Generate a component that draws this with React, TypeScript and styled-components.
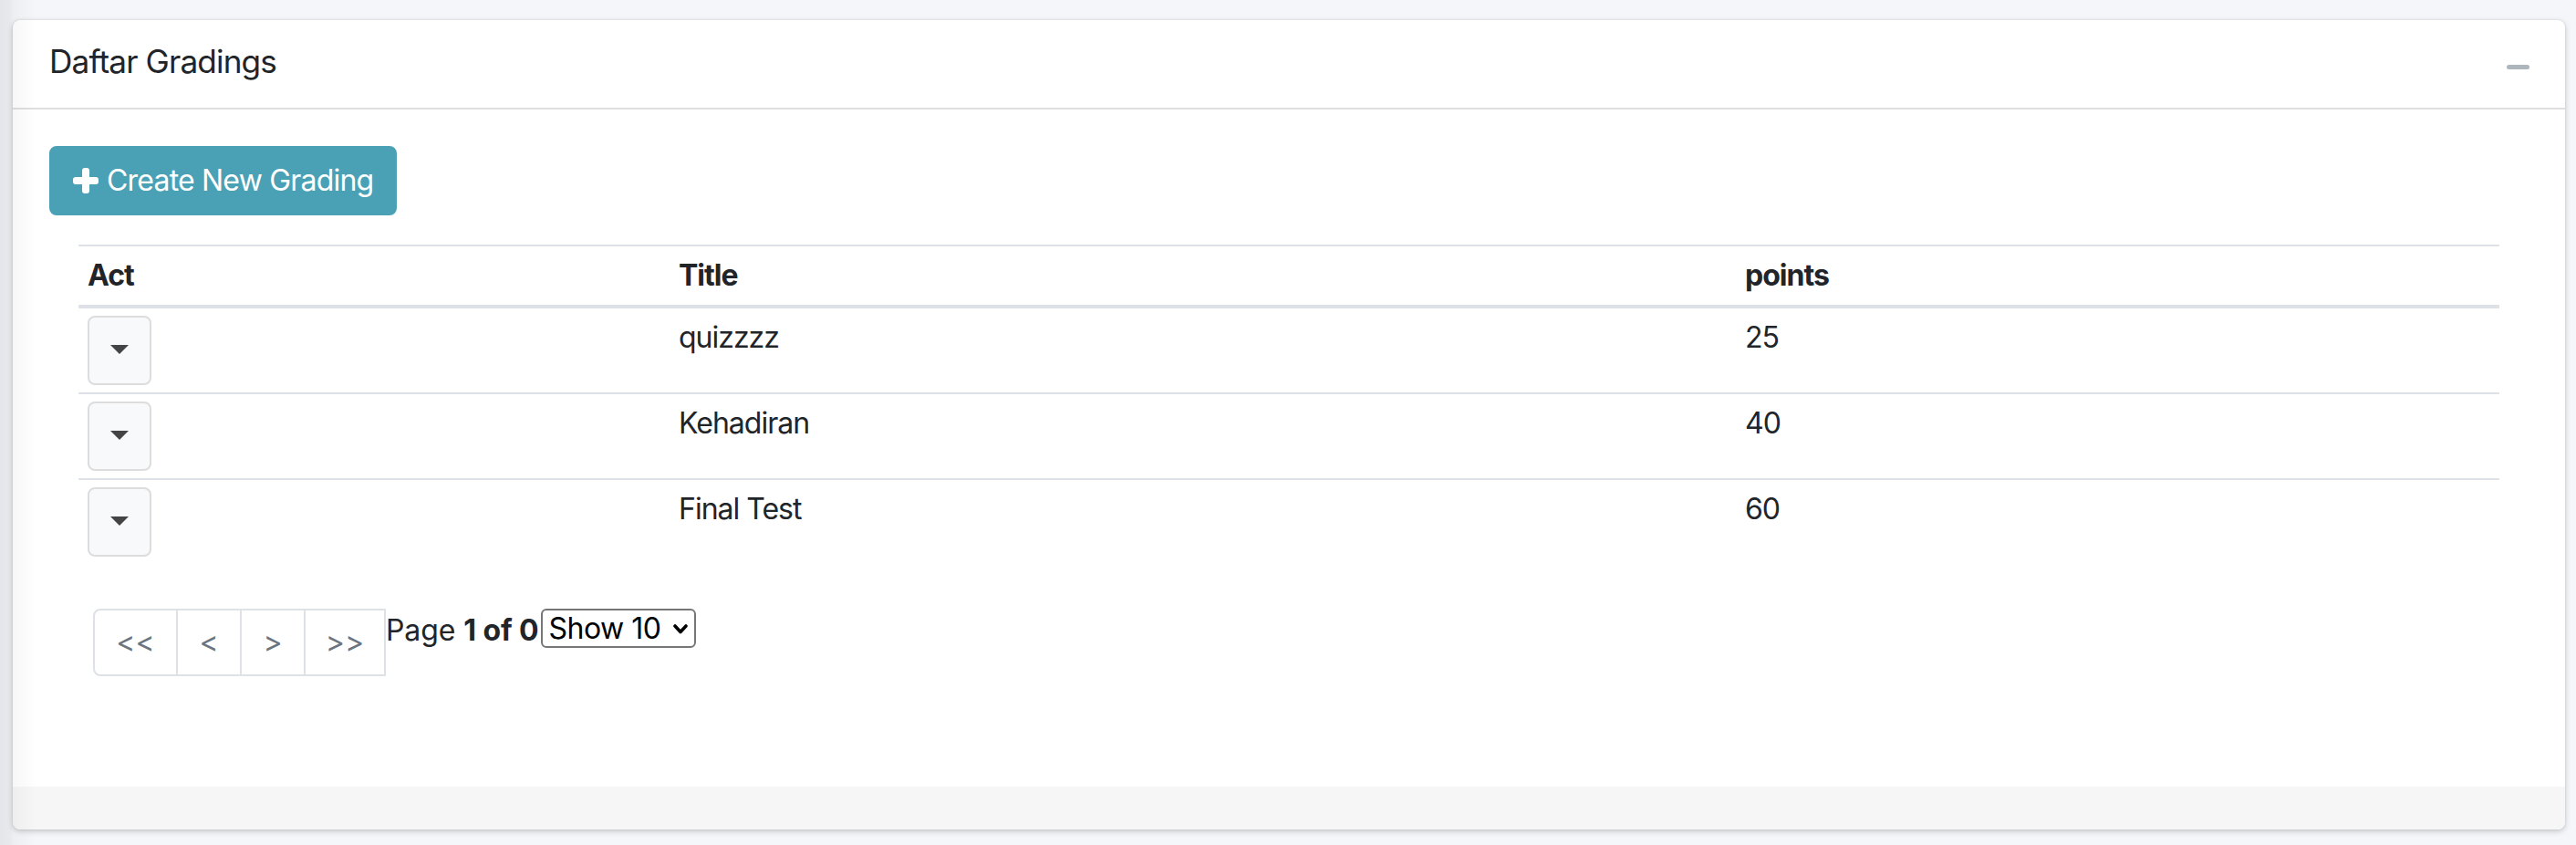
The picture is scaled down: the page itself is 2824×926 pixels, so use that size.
import React from "react";
import styled, { createGlobalStyle } from "styled-components";

const GlobalStyle = createGlobalStyle`
  html, body { margin: 0; padding: 0; background: #f4f6f9; }
  body {
    font-family: Inter, "Noto Sans", "Liberation Sans", sans-serif;
    color: #212529;
  }
  *, *::before, *::after { box-sizing: border-box; }
`;

const Page = styled.div`
  position: relative;
  min-height: 926px;
  padding: 22px 12px 16px 14px;
`;

const EdgeShade = styled.div`
  position: absolute;
  top: 0;
  left: 0;
  bottom: 0;
  width: 44px;
  pointer-events: none;
  background: linear-gradient(
    to right,
    rgba(0, 0, 0, 0.065) 0px,
    rgba(0, 0, 0, 0.05) 12px,
    rgba(0, 0, 0, 0.03) 14px,
    rgba(0, 0, 0, 0) 40px
  );
`;

const Card = styled.section`
  display: flex;
  flex-direction: column;
  background: #fff;
  border-radius: 8px;
  box-shadow: 0 0 2px rgba(0, 0, 0, 0.125), 0 2px 6px rgba(0, 0, 0, 0.2);
`;

const CardHeader = styled.header`
  display: flex;
  align-items: flex-start;
  padding: 24px 40px;
  border-bottom: 2px solid rgba(0, 0, 0, 0.125);
`;

const CardTitle = styled.h3`
  margin: 0;
  padding-bottom: 6px;
  font-size: 35.2px;
  font-weight: 400;
  line-height: 42px;
  letter-spacing: -0.85px;
  color: #212529;
`;

const ToolButton = styled.button`
  display: flex;
  margin: 25px -1px 0 auto;
  padding: 0;
  border: 0;
  background: none;
  line-height: 0;
  cursor: pointer;
`;

const CardBody = styled.div`
  display: flex;
  flex-direction: column;
  align-items: flex-start;
  padding: 40px;
`;

const CreateButton = styled.button`
  display: inline-flex;
  align-items: center;
  gap: 9px;
  padding: 12px 24px;
  border: 2px solid #4aa1b5;
  border-radius: 8px;
  background: #4aa1b5;
  color: #fff;
  font-family: inherit;
  font-size: 32px;
  line-height: 48px;
  letter-spacing: -0.8px;
  cursor: pointer;
`;

const TableWrap = styled.div`
  align-self: stretch;
  margin-top: 32px;
  padding: 0 32px;
`;

const Table = styled.table`
  width: 100%;
  border-collapse: separate;
  border-spacing: 0;
  table-layout: fixed;
  font-size: 32px;
  line-height: 48px;
  letter-spacing: -1px;
  color: #212529;
`;

const Th = styled.th`
  padding: 8px 10px;
  text-align: left;
  font-weight: 700;
  vertical-align: bottom;
  border-top: 2px solid #dee2e6;
  border-bottom: 4px solid #dee2e6;
`;

const TBody = styled.tbody`
  & > tr:first-child > td {
    border-top: 0;
  }
`;

const Td = styled.td`
  padding: 8px 10px;
  vertical-align: top;
  border-top: 2px solid #dee2e6;
`;

const ActionToggle = styled.button`
  display: flex;
  align-items: center;
  justify-content: center;
  width: 70px;
  height: 76px;
  padding: 0 0 3px;
  background: #f8f9fa;
  border: 2px solid #dddddd;
  border-radius: 8px;
  cursor: pointer;
`;

const Pager = styled.div`
  display: flex;
  align-items: flex-start;
  margin: 49px 0 81px 48px;
`;

const PageButtons = styled.nav`
  display: flex;
`;

const PageButton = styled.button<{ $w: number }>`
  width: ${(p) => p.$w}px;
  height: 74px;
  padding: 0;
  border: 2px solid #dee2e6;
  background: #fff;
  color: #6c757d;
  font-family: inherit;
  font-size: 32px;
  line-height: 40px;
  text-align: center;
  cursor: pointer;

  & + & {
    margin-left: -2px;
  }
  &:first-child {
    border-radius: 8px 0 0 8px;
  }
`;

const PageInfo = styled.span`
  font-size: 32px;
  line-height: 48px;
  letter-spacing: -0.1px;
  color: #212529;
  white-space: pre;

  strong {
    font-weight: 700;
  }
`;

const SelectWrap = styled.span`
  position: relative;
  display: inline-block;
  margin-left: 2px;
`;

const PageSize = styled.select`
  appearance: none;
  -webkit-appearance: none;
  width: 170px;
  height: 43px;
  padding: 0 0 0 7px;
  border: 2px solid #767676;
  border-radius: 6px;
  background: #fff;
  color: #000;
  font-family: inherit;
  font-size: 32px;
  line-height: 39px;
  letter-spacing: -0.5px;
`;

const SelectChevron = styled.svg`
  position: absolute;
  top: 17px;
  right: 9px;
  pointer-events: none;
`;

const CardFooter = styled.footer`
  height: 47px;
  background: #f6f6f6;
  border-radius: 0 0 8px 8px;
`;

const PlusIcon = () => (
  <svg width="28" height="28" viewBox="0 0 28 28" aria-hidden="true">
    <rect x="0" y="10" width="28" height="8" rx="3" fill="#fff" />
    <rect x="10" y="0" width="8" height="28" rx="3" fill="#fff" />
  </svg>
);

const MinusIcon = () => (
  <svg width="25" height="5" viewBox="0 0 25 5" aria-hidden="true">
    <rect x="0" y="0" width="25" height="5" rx="2.5" fill="#adb5bd" />
  </svg>
);

const Caret = () => (
  <svg width="20" height="10" viewBox="0 0 20 10" aria-hidden="true">
    <polygon points="0,0 20,0 10,10" fill="#444" />
  </svg>
);

const rows = [
  { title: "quizzzz", points: 25 },
  { title: "Kehadiran", points: 40 },
  { title: "Final Test", points: 60 },
];

export default function App() {
  return (
    <>
      <GlobalStyle />
      <Page>
        <Card>
          <CardHeader>
            <CardTitle>Daftar Gradings</CardTitle>
            <ToolButton aria-label="Collapse">
              <MinusIcon />
            </ToolButton>
          </CardHeader>
          <CardBody>
            <CreateButton>
              <PlusIcon />
              Create New Grading
            </CreateButton>
            <TableWrap>
              <Table>
                <colgroup>
                  <col style={{ width: 648 }} />
                  <col style={{ width: 1169 }} />
                  <col />
                </colgroup>
                <thead>
                  <tr>
                    <Th>Act</Th>
                    <Th>Title</Th>
                    <Th>points</Th>
                  </tr>
                </thead>
                <TBody>
                  {rows.map((r) => (
                    <tr key={r.title}>
                      <Td>
                        <ActionToggle aria-label="Actions">
                          <Caret />
                        </ActionToggle>
                      </Td>
                      <Td>{r.title}</Td>
                      <Td>{r.points}</Td>
                    </tr>
                  ))}
                </TBody>
              </Table>
            </TableWrap>
            <Pager>
              <PageButtons>
                <PageButton $w={93}>{"<<"}</PageButton>
                <PageButton $w={72}>{"<"}</PageButton>
                <PageButton $w={72}>{">"}</PageButton>
                <PageButton $w={90}>{">>"}</PageButton>
              </PageButtons>
              <PageInfo>
                Page <strong>1 of 0</strong>
              </PageInfo>
              <SelectWrap>
                <PageSize defaultValue="10">
                  <option value="10">Show 10</option>
                  <option value="20">Show 20</option>
                  <option value="30">Show 30</option>
                </PageSize>
                <SelectChevron width="16" height="11" viewBox="0 0 16 11" aria-hidden="true">
                  <polyline
                    points="2,2 8,8.5 14,2"
                    fill="none"
                    stroke="#000"
                    strokeWidth="3.6"
                    strokeLinecap="round"
                    strokeLinejoin="round"
                  />
                </SelectChevron>
              </SelectWrap>
            </Pager>
          </CardBody>
          <CardFooter />
        </Card>
        <EdgeShade />
      </Page>
    </>
  );
}
